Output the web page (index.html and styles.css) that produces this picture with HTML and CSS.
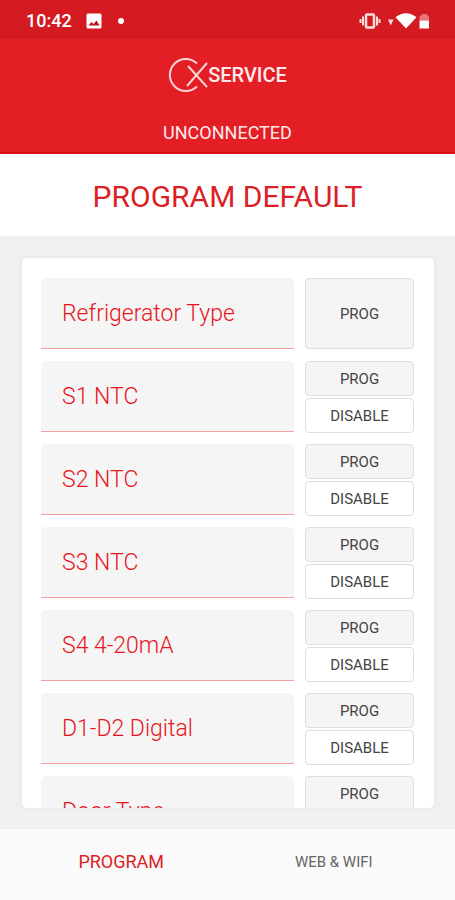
FILE: index.html
```html
<!DOCTYPE html>
<html lang="en">
<head>
<meta charset="utf-8">
<meta name="viewport" content="width=device-width, initial-scale=1">
<title>CX Service</title>
<link rel="stylesheet" href="styles.css">
</head>
<body>
<div class="status">
  <span class="clock">10:42</span>
  <svg class="picture" viewBox="0 0 16 16" width="16" height="16" aria-hidden="true"><rect x="0.500" y="0.500" width="15" height="15" rx="1.5" fill="#fff"/><path d="M2.500 12.5 5.500 9l2 2 3-3.500 3 5z" fill="#c2141b"/></svg>
  <span class="dot"></span>
  <svg class="signals" viewBox="0 0 72 20" width="72" height="20" aria-hidden="true">
    <g fill="none" stroke="#fbdcdd" stroke-width="2"><rect x="7" y="3.500" width="8" height="13" rx="1" stroke-width="2.500"/><path d="M4 5.500v9M18 5.500v9M1.500 8v4M20.500 8v4"/></g>
    <path d="M29 8.500h5.500L31.750 14.500z" fill="#fbdcdd"/>
    <path d="M36.500 6.200Q47-1.500 57.500 6.200L47 17.500z" fill="#fff"/>
    <path d="M60.500 9.500V5.500q0-1 1-1H63v-1.500h5v1.500h1q1 0 1 1V9.500z" fill="#e8767a"/><path d="M60.500 9.500H70v8H60.500z" fill="#fff"/>
  </svg>
</div>
<header class="header">
  <div class="brand">
    <svg viewBox="0 0 40 36" width="40" height="36" aria-hidden="true"><g fill="none" stroke="#fbd3d4" stroke-width="2"><path d="M29 6.500A16 16 0 1 0 29 29.500"/><path d="M20 9 39 30M39 6 19 29"/></g></svg>
    <span>SERVICE</span>
  </div>
  <p class="connection">UNCONNECTED</p>
</header>
<h1 class="title">PROGRAM DEFAULT</h1>
<main class="main">
  <form class="card">
    <div class="row"><input class="field" aria-label="Refrigerator Type" placeholder="Refrigerator Type"><div class="actions"><button type="button" class="prog tall">PROG</button></div></div>
    <div class="row"><input class="field" aria-label="S1 NTC" placeholder="S1 NTC"><div class="actions"><button type="button" class="prog">PROG</button><button type="button">DISABLE</button></div></div>
    <div class="row"><input class="field" aria-label="S2 NTC" placeholder="S2 NTC"><div class="actions"><button type="button" class="prog">PROG</button><button type="button">DISABLE</button></div></div>
    <div class="row"><input class="field" aria-label="S3 NTC" placeholder="S3 NTC"><div class="actions"><button type="button" class="prog">PROG</button><button type="button">DISABLE</button></div></div>
    <div class="row"><input class="field" aria-label="S4 4-20mA" placeholder="S4 4-20mA"><div class="actions"><button type="button" class="prog">PROG</button><button type="button">DISABLE</button></div></div>
    <div class="row"><input class="field" aria-label="D1-D2 Digital" placeholder="D1-D2 Digital"><div class="actions"><button type="button" class="prog">PROG</button><button type="button">DISABLE</button></div></div>
    <div class="row"><input class="field" aria-label="Door Type" placeholder="Door Type"><div class="actions"><button type="button" class="prog">PROG</button></div></div>
  </form>
</main>
<nav class="tabs">
  <a href="#program" class="active" aria-current="page">PROGRAM</a>
  <a href="#wifi">WEB &amp; WIFI</a>
</nav>
</body>
</html>
```
FILE: styles.css
```css
* { box-sizing: border-box; }
body {
  margin: 0;
  height: 100vh;
  display: flex;
  flex-direction: column;
  background: #f0f0f0;
  font-family: Roboto, "Liberation Sans", sans-serif;
  color: #444;
}
.status {
  display: flex;
  align-items: center;
  height: 39px;
  padding: 2px 24px 0 26px;
  background: #d41b22;
  color: #fff;
}
.clock { font-size: 18px; font-weight: 500; line-height: 20px; }
.picture { margin-left: 14px; }
.dot { width: 6px; height: 6px; margin-left: 16px; border-radius: 50%; background: #fff; }
.signals { margin-left: auto; }
.header {
  display: flex;
  flex-direction: column;
  align-items: center;
  height: 115px;
  padding-top: 18px;
  background: #e31e25;
  border-bottom: 2px solid #d40f15;
  color: #fdeaea;
}
.brand { display: flex; align-items: center; font-size: 20px; font-weight: 500; line-height: 36px; }
.connection { margin: 28px 0 0; font-size: 18px; line-height: 24px; }
.title {
  margin: 0;
  padding: 23px 0 19px;
  background: #fff;
  color: #dc1f26;
  font-size: 30px;
  font-weight: 400;
  line-height: 40px;
  text-align: center;
}
.main { flex: 1; min-height: 0; padding: 20px 19px 20px 20px; display: flex; }
.card {
  flex: 1;
  display: flex;
  flex-direction: column;
  gap: 12px;
  padding: 20px 20px 0 19px;
  overflow: hidden;
  background: #fff;
  border: 2px solid #eaeaea;
  border-bottom-width: 1px;
  border-radius: 6px;
}
.row { display: flex; flex: none; gap: 11px; height: 71px; }
.field {
  flex: 1;
  min-width: 0;
  padding: 0 21px;
  border: 0;
  border-bottom: 1px solid #f4a0a3;
  border-radius: 5px 5px 0 0;
  background: #f5f5f5;
  color: #e8252c;
  font: 300 23px Roboto, "Liberation Sans", sans-serif;
}
.field::placeholder { color: #e8151c; opacity: 1; }
.actions { display: flex; flex-direction: column; gap: 2px; width: 109px; }
.actions button {
  flex: none;
  height: 35px;
  padding: 0;
  border: 1px solid #dedede;
  border-radius: 4px;
  background: #fff;
  color: #444;
  font: 400 15px Roboto, "Liberation Sans", sans-serif;
}
.actions .prog { background: #f5f5f5; }
.actions .tall { height: 71px; }
.tabs {
  display: flex;
  height: 71px;
  padding: 0 15px 6px;
  align-items: center;
  background: #fafafa;
}
.tabs a { flex: 1; color: #666; font-size: 15px; line-height: 20px; text-align: center; text-decoration: none; }
.tabs .active { color: #dc1f26; font-size: 18px; }
```
